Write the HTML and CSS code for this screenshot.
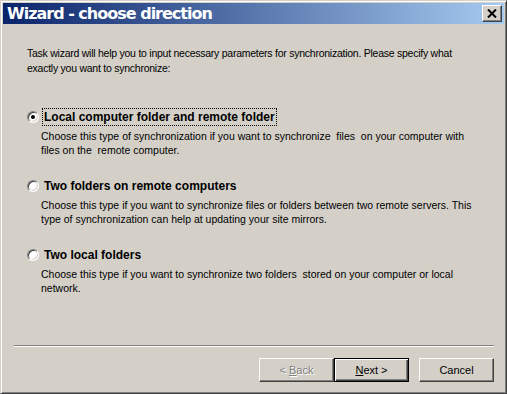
FILE: index.html
```html
<!DOCTYPE html>
<html lang="en">
<head>
  <meta charset="UTF-8">
  <title>Wizard - choose direction</title>
  <link rel="stylesheet" href="styles.css">
</head>
<body>
  <div class="window">
    <div class="titlebar">
      <span class="title">Wizard - choose direction</span>
      <button class="close" aria-label="Close">
        <svg width="10" height="9" viewBox="0 0 10 9"><path d="M1 0.5 L9 8.5 M9 0.5 L1 8.5" stroke="#000" stroke-width="2"/></svg>
      </button>
    </div>

    <div class="content">
      <p class="intro">Task wizard will help you to input necessary parameters for synchronization. Please specify what exactly you want to synchronize:</p>

      <div class="option">
        <div class="option-row">
          <span class="radio checked"></span>
          <span class="label focused">Local computer folder and remote folder</span>
        </div>
        <p class="desc">Choose this type of synchronization if you want to synchronize &nbsp;files &nbsp;on your computer with files on the &nbsp;remote computer.</p>
      </div>

      <div class="option">
        <div class="option-row">
          <span class="radio"></span>
          <span class="label">Two folders on remote computers</span>
        </div>
        <p class="desc">Choose this type if you want to synchronize files or folders between two remote servers. This type of synchronization can help at updating your site mirrors.</p>
      </div>

      <div class="option">
        <div class="option-row">
          <span class="radio"></span>
          <span class="label">Two local folders</span>
        </div>
        <p class="desc">Choose this type if you want to synchronize two folders &nbsp;stored on your computer or local network.</p>
      </div>
    </div>

    <div class="footer">
      <div class="separator"></div>
      <div class="buttons">
        <button class="btn disabled">&lt; <u>B</u>ack</button>
        <button class="btn default"><u>N</u>ext &gt;</button>
        <button class="btn">Cancel</button>
      </div>
    </div>
  </div>
</body>
</html>
```

FILE: styles.css
```css
body {
  margin: 0;
  background: #d4d0c8;
  font-family: "Liberation Sans", Arial, sans-serif;
  font-size: 10.5px;
  letter-spacing: -0.25px;
  color: #000;
}
.window {
  width: 507px;
  height: 394px;
  box-sizing: border-box;
  display: flex;
  flex-direction: column;
  background: #d4d0c8;
  border: 1px solid;
  border-color: #d4d0c8 #404040 #404040 #d4d0c8;
  box-shadow: inset 1px 1px 0 #fff, inset -1px -1px 0 #808080;
  padding: 2px 2px 2px 2px;
}
.titlebar {
  height: 21px;
  display: flex;
  align-items: center;
  justify-content: space-between;
  padding: 0 2px 0 4px;
  background: linear-gradient(to right, #0a246a, #a6caf0);
}
.title {
  color: #fff;
  font-family: "DejaVu Sans", Verdana, sans-serif;
  font-weight: bold;
  font-size: 16px;
  letter-spacing: -1px;
}
.close {
  width: 20px;
  height: 17px;
  padding: 0;
  display: flex;
  align-items: center;
  justify-content: center;
  background: #d4d0c8;
  border: 1px solid;
  border-color: #fff #404040 #404040 #fff;
  box-shadow: inset -1px -1px 0 #808080;
}
.content {
  padding: 22px 24px 0 24px;
}
.intro {
  margin: 0 0 32px 0;
  line-height: 15px;
}
.option {
  margin-bottom: 20px;
}
.option-row {
  display: flex;
  align-items: center;
  height: 18px;
}
.radio {
  width: 12px;
  height: 12px;
  box-sizing: border-box;
  border-radius: 50%;
  background: #fff;
  border: 1px solid;
  border-color: #808080 #fff #fff #808080;
  box-shadow: inset 1px 1px 0 #404040, inset -1px -1px 0 #d4d0c8;
  margin: 0 3px 0 0;
  display: flex;
  align-items: center;
  justify-content: center;
}
.radio.checked::after {
  content: "";
  width: 4px;
  height: 4px;
  border-radius: 50%;
  background: #000;
}
.label {
  font-weight: bold;
  font-size: 12px;
  letter-spacing: 0;
  padding: 1px 1px;
  border: 1px dotted transparent;
}
.label.focused {
  border-color: #000;
}
.desc {
  margin: 3px 0 0 14px;
  max-width: 440px;
  line-height: 14px;
  letter-spacing: 0;
}
.footer {
  margin-top: auto;
  padding: 0 10px 9px 11px;
}
.separator {
  border-top: 1px solid #808080;
  border-bottom: 1px solid #fff;
  margin-bottom: 11px;
}
.buttons {
  display: flex;
  justify-content: flex-end;
  gap: 0;
}
.btn {
  width: 75px;
  height: 24px;
  font-family: "Liberation Sans", Arial, sans-serif;
  font-size: 11px;
  color: #000;
  background: #d4d0c8;
  border: 1px solid;
  border-color: #fff #404040 #404040 #fff;
  box-shadow: inset -1px -1px 0 #808080;
  padding: 0;
}
.btn.default {
  border: 1px solid #000;
  box-shadow: inset 1px 1px 0 #fff, inset -1px -1px 0 #404040, inset -2px -2px 0 #808080;
  margin-right: 10px;
}
.btn.disabled {
  color: #808080;
  text-shadow: 1px 1px 0 #fff;
}
```
